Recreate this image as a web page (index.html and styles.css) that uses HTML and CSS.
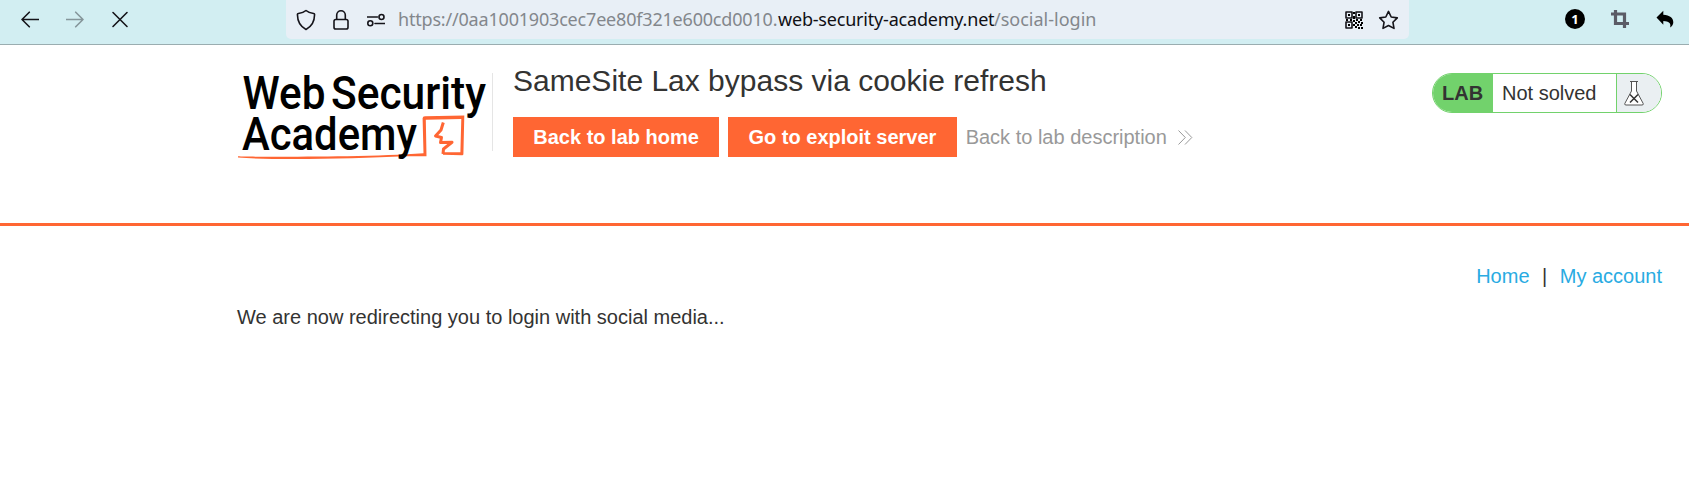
FILE: index.html
```html
<!DOCTYPE html>
<html lang="en">
<head>
<meta charset="utf-8">
<title>SameSite Lax bypass via cookie refresh</title>
<link rel="stylesheet" href="styles.css">
</head>
<body>
<div class="toolbar">
  <div class="nav">
    <svg width="18" height="18" viewBox="0 0 18 18"><path d="M17.5 9.5H1M8.3 2.2 1 9.5l7.3 7.3" class="stroke"/></svg>
    <svg width="18" height="18" viewBox="0 0 18 18" class="disabled"><path d="M.5 9.5H17M9.7 2.2 17 9.5l-7.3 7.3" class="stroke"/></svg>
    <svg width="18" height="18" viewBox="0 0 18 18"><path d="m2 2.5 14 14M16 2.5l-14 14" class="stroke"/></svg>
  </div>
  <div class="address">
    <svg class="shield" width="20" height="22" viewBox="0 0 20 22"><path d="M10 1.5C8 3.3 5 4.2 2.4 4.5 1.6 4.6 1.4 5 1.4 5.6 1.5 12 4 17.5 10 20.5c6-3 8.500-8.500 8.600-14.900 0-.6-.2-1-1-1.100C15 4.200 12 3.300 10 1.500z" class="stroke"/></svg>
    <svg class="lock" width="16" height="22" viewBox="0 0 16 22"><rect x="1" y="10.500" width="14" height="9.500" rx="1.800" class="stroke"/><path d="M3.700 10V6a4.300 4.300 0 0 1 8.600 0v4" class="stroke"/></svg>
    <svg class="perms" width="18" height="14" viewBox="0 0 18 14"><g class="stroke"><path d="M0 4h10.500M8 10.500h10"/><circle cx="14.500" cy="4" r="2.500"/><circle cx="3.300" cy="10.300" r="2.500"/></g></svg>
    <div class="url"><span class="host">https://0aa1001903cec7ee80f321e600cd0010.</span><span class="domain">web-security-academy.net</span><span class="path">/social-login</span></div>
    <svg class="qr" width="18" height="18" viewBox="0 0 18 18"><path d="M1 1h6v6H1zM11 1h6v6h-6zM1 11h6v6H1z" class="stroke"/><path d="M3 3h2v2H3zM13 3h2v2h-2zM3 13h2v2H3zM8 1h2v2H8zM8 5h2v3H8zM1 8h2v2H1zM5 8h2v2H5zM8 9h2v2H8zM11 8h2v2h-2zM15 8h2v2h-2zM10 11h2v2h-2zM13 10h2v2h-2zM16 11h2v2h-2zM8 13h2v2H8zM12 13h2v2h-2zM15 13h2v2h-2zM10 15h2v2h-2zM13 16h2v2h-2zM16 16h2v2h-2z"/></svg>
    <svg class="star" width="21" height="20" viewBox="0 0 21 20"><path d="M10.500 1.400 13.200 7l6.100.9-4.400 4.300 1.100 6.200-5.500-2.900L5 18.400l1.100-6.200L1.700 7.900 7.800 7z" class="stroke"/></svg>
  </div>
  <div class="extensions">
    <span class="counter">1</span>
    <svg width="18" height="18" viewBox="0 0 18 18"><path d="M4.500 0v13.500H18M0 4h13.500v14" class="crop"/></svg>
    <svg width="18" height="18" viewBox="0 0 18 18"><path d="M7.300.7v4.100c6.500.3 10 3.300 10 7.500 0 2.300-1.200 4-3.200 5.200 1.300-4.200-1.400-6.400-6.800-6.500v3.700L.5 7.500z"/></svg>
  </div>
</div>
<header class="lab-header">
  <svg class="logo" width="255" height="90" viewBox="0 0 255 90">
    <path class="logo-fill" d="M1 86.300C12 87 70 86.600 110 86.200 140 86 165 84.500 186.500 83.300L185.600 48.500Q185.500 46.300 188 46.300L227.300 45.500 226.400 84Q226.400 85.300 225 85.200L206 84.800V82.300L223.400 82.200 224.300 49 188.800 49.800 189.500 86.200 168 86.300C120 88.500 40 90.500 1 87.500z"/>
    <path class="logo-bolt" d="M206.300 52.500 204 60l-5.500 6 6 1.500-1 5 11.500-.2-8.500 6.700-.5 5"/>
    <g class="logo-text">
      <text x="5.500" y="39.300" textLength="83" lengthAdjust="spacingAndGlyphs">Web</text>
      <text x="94" y="39.300" textLength="155" lengthAdjust="spacingAndGlyphs">Security</text>
      <text x="5" y="80" textLength="175" lengthAdjust="spacingAndGlyphs">Academy</text>
    </g>
  </svg>
  <div class="title">
    <h2>SameSite Lax bypass via cookie refresh</h2>
    <div class="actions">
      <a class="button">Back to lab home</a>
      <a class="button">Go to exploit server</a>
      <a class="back">Back to lab description
        <svg width="15" height="15" viewBox="0 0 15 15"><path d="m.5.500 6.800 7-6.800 7M7 .5l6.800 7-6.800 7"/></svg></a>
    </div>
  </div>
  <div class="status">
    <b>LAB</b>
    <p>Not solved</p>
    <span class="flask"><svg width="20" height="26" viewBox="0 0 20 26"><path class="glass" d="M6 1.500h8M7.500 1.500v9.500L.8 23.500Q.3 25 2 25h16q1.700 0 1.200-1.500L12.500 11V1.500"/><path class="cross" d="m6 14.500 8 8m0-8-8 8"/></svg></span>
  </div>
</header>
<main>
  <nav class="links"><a>Home</a><span>|</span><a>My account</a></nav>
  <p class="message">We are now redirecting you to login with social media...</p>
</main>
</body>
</html>
```
FILE: styles.css
```css
* { box-sizing: border-box; }
body { margin: 0; background: #fff; color: #333332; font: 20px/24px "Liberation Sans", Arial, sans-serif; }
h2, p { margin: 0; font-weight: 400; }
svg { display: block; flex: none; }
.toolbar { height: 45px; background: #d2eef2; border-bottom: 1px solid #9aadb0; display: flex; }
.stroke { fill: none; stroke: #15141a; stroke-width: 1.6; stroke-linecap: round; stroke-linejoin: round; }
.nav { width: 286px; padding: 10px 0 0 21px; display: flex; gap: 27px; }
.disabled { opacity: .4; }
.address { width: 1123px; height: 39px; background: #e8eff6; border-radius: 0 0 5px 5px; display: flex; align-items: center; padding-left: 10px; }
.lock { margin-left: 17px; }
.perms { margin-left: 18px; }
.url { width: 957px; padding-left: 13px; height: 39px; font: 18px/39px "Noto Sans", sans-serif; white-space: nowrap; color: #83878c; display: flex; }
.host { width: 380px; letter-spacing: -.19px; }
.domain { width: 216px; color: #101014; letter-spacing: -.2px; }
.qr { margin-left: 3px; }
.star { margin-left: 15px; }
.extensions { margin-left: auto; padding: 9px 15px 0 0; display: flex; gap: 27px; }
.extensions svg { margin-top: 1px; }
.counter { width: 20px; height: 20px; margin-right: -1px; border-radius: 50%; background: #000; color: #fff; font: 700 13px/20px "Noto Sans", sans-serif; text-align: center; }
.crop { fill: none; stroke: #5b5b66; stroke-width: 3.2; }
.lab-header { height: 181px; padding: 25px 27px 0 237px; border-bottom: 3px solid #ff6633; display: flex; align-items: flex-start; }
.logo { overflow: visible; }
.logo-text { font: 500 47px Roboto, sans-serif; }
.logo-fill { fill: #ff6633; }
.logo-bolt { fill: none; stroke: #ff6633; stroke-width: 3; stroke-linejoin: round; }
.title { padding-left: 20px; margin-top: 3px; height: 78px; border-left: 1px solid #e5e5e5; }
h2 { font-size: 30px; line-height: 34px; margin-top: -9px; white-space: nowrap; }
.actions { display: flex; gap: 9px; margin-top: 19px; line-height: 40px; white-space: nowrap; }
.button { height: 40px; padding: 0 20.3px; background: #ff6633; color: #fff; font-weight: 700; }
.back { color: #999; display: flex; align-items: center; gap: 11px; }
.back path { fill: none; stroke: #999; stroke-width: 1; }
.status { width: 230px; height: 40px; margin: 3px 0 0 auto; border: 1px solid #72d26c; border-radius: 20px; overflow: hidden; display: flex; line-height: 38px; }
.status b { width: 60px; background: #72d26c; padding-left: 9px; }
.status p { width: 124px; padding-left: 9px; border-right: 1px solid #72d26c; }
.flask { flex: 1; background: #eaeff2; padding: 6px 0 0 7px; }
.glass { fill: #fff; stroke: #555; stroke-width: 1; }
.cross { stroke: #333; stroke-width: 1.5; }
main { padding: 38px 27px 0 237px; }
.links { display: flex; justify-content: flex-end; gap: 12.5px; color: #29abe2; }
.links span { color: #333332; }
.message { margin-top: 17px; }
```
